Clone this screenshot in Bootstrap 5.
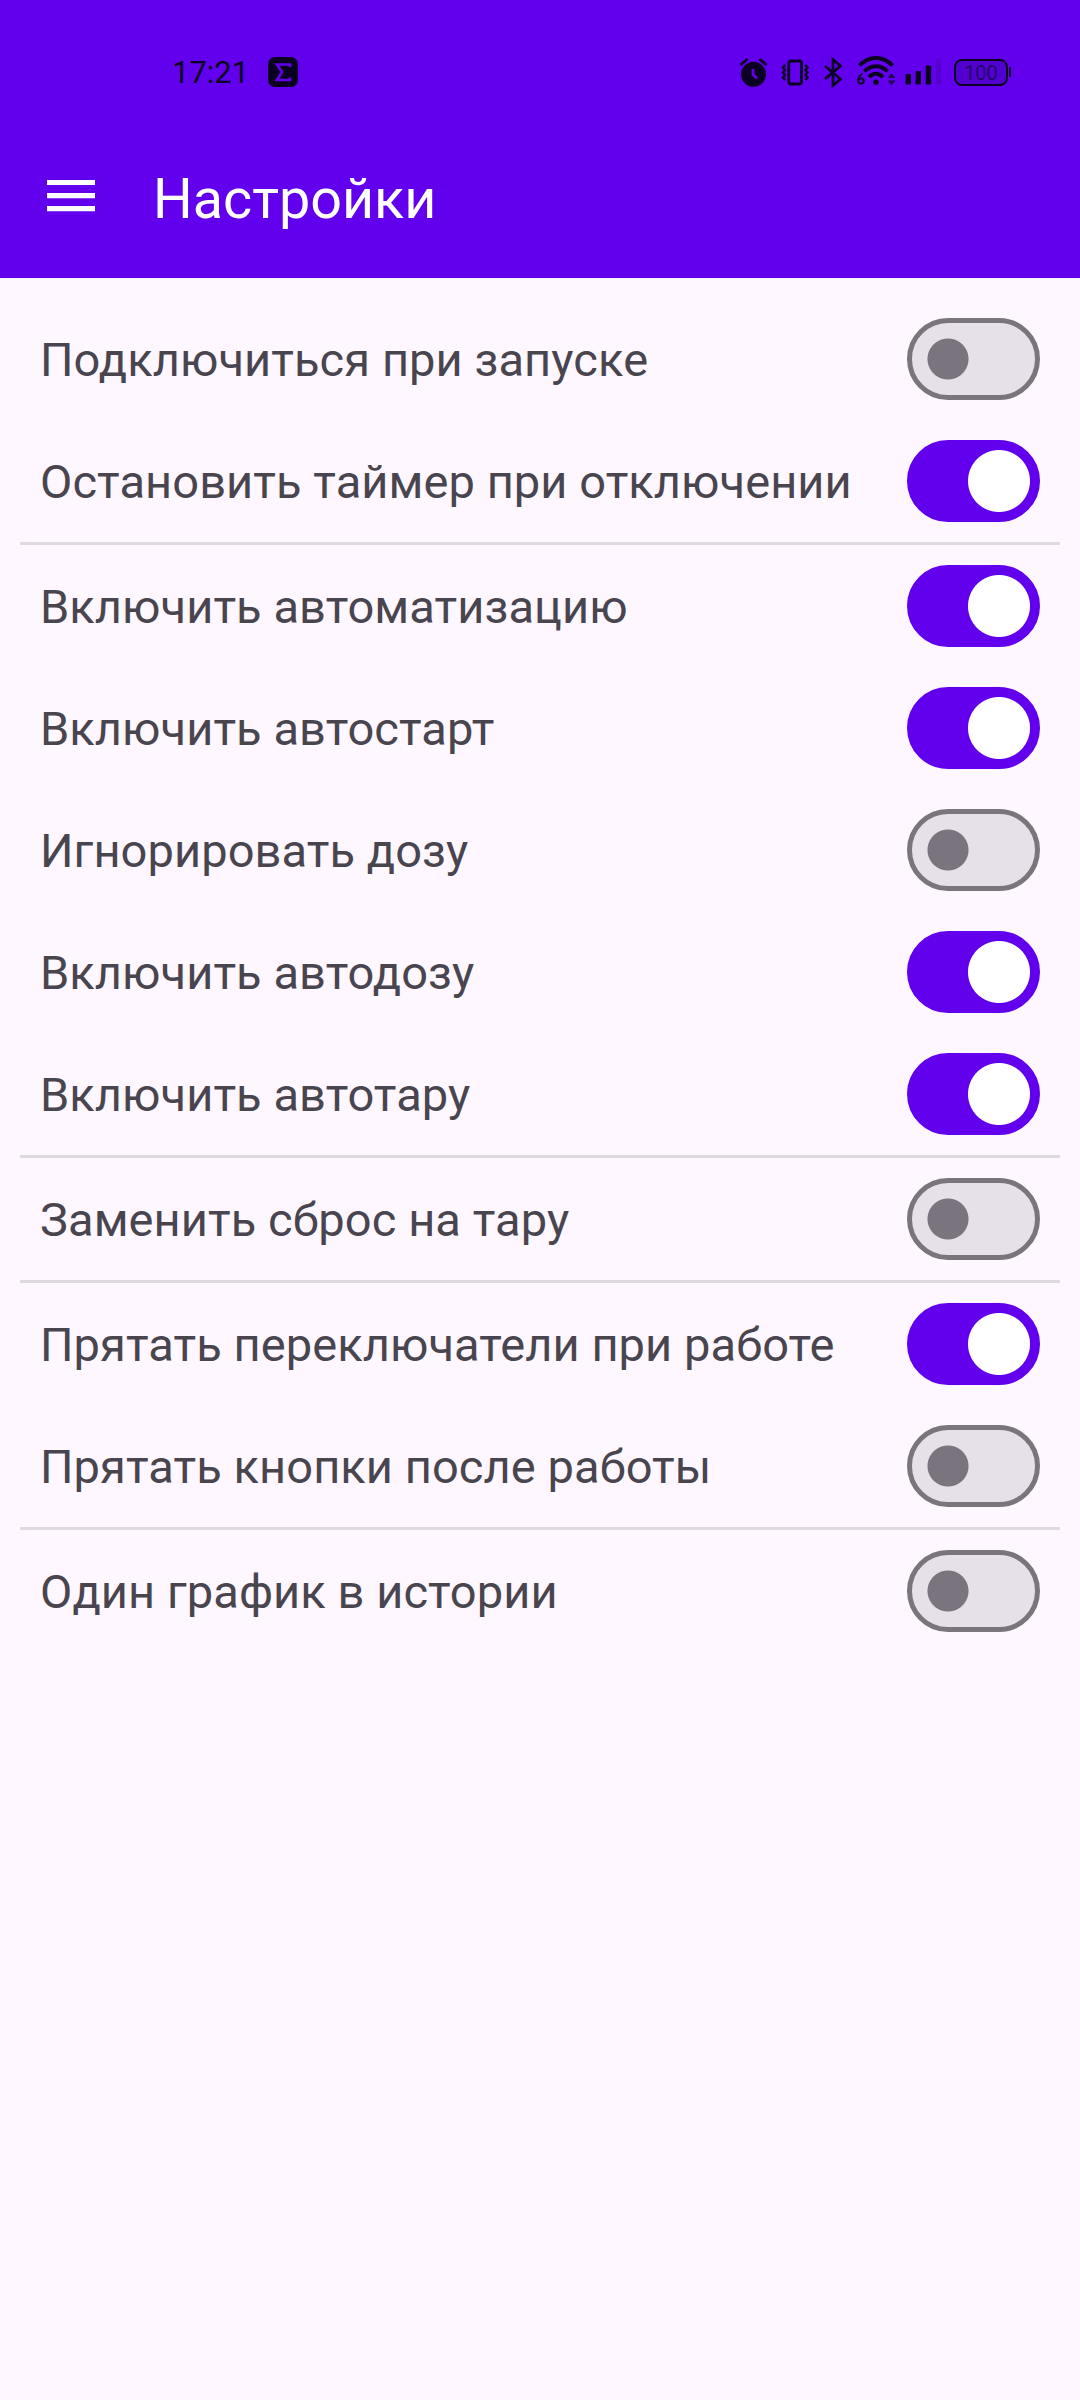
<!DOCTYPE html>
<html lang="ru">
<head>
<meta charset="utf-8">
<meta name="viewport" content="width=device-width, initial-scale=1">
<title>Настройки</title>
<link href="https://cdn.jsdelivr.net/npm/bootstrap@5.3.0/dist/css/bootstrap.min.css" rel="stylesheet">
<style>
:root{--brand:#6200ee;--ink:#0c0022}
body{background:#fef7ff;color:#49454f;font-family:Roboto,"Noto Sans",sans-serif;min-height:2400px}
.app-header{background:var(--brand);height:278px}
.status-bar{height:118px;padding:26px 69px 0 172px;color:var(--ink)}
.status-bar svg{display:block;flex:none}
.clock-time{font-size:31px;line-height:32px;width:96px;padding-top:2px;white-space:nowrap}
.battery-box{width:54px;height:27px;border:2px solid var(--ink);border-radius:8px;background:#5200d0;font-size:20px;line-height:24px;color:#26006b}
.battery-tip{width:2px;height:10px;background:var(--ink);margin-left:1px}
.title-bar{padding:46px 47px 0;height:160px}
.title-bar .btn{line-height:0;margin-top:16px}
.page-title{font-size:55.7px;line-height:66px;margin:2px 0 0 58px;font-weight:400}
.settings-list{padding:20px}
.setting-row{height:122px;padding:0 20px;font-size:47px;line-height:72px;letter-spacing:.08px}
.setting-row span{padding-top:1px}
.settings-group+.settings-group{border-top:3px solid #dfd9e0}
.setting-row .form-check-input{width:133px;height:82px;margin:0;border:5px solid #79747e;border-radius:41px;background-color:#e6e0e9;
background-image:radial-gradient(circle at 36px 36px,#79747e 20px,transparent 21px);background-size:100% 100%;background-position:0 0;flex:none;float:none}
.setting-row .form-check-input:checked{border-color:var(--brand);background-color:var(--brand);background-image:radial-gradient(circle at 87px 36px,#fff 30.5px,transparent 31.5px);background-position:0 0}
</style>
</head>
<body>
<header class="app-header">
  <div class="status-bar d-flex align-items-center">
    <span class="clock-time">17:21</span>
    <svg width="30" height="30" viewBox="0 0 30 30"><rect width="30" height="30" rx="7" fill="#0c0022"/><path d="M22 10V7.500H9L14 15 9 23H22V20.500" fill="none" stroke="#6200ee" stroke-width="2.600"/></svg>
    <div class="d-flex align-items-center ms-auto">
      <!-- alarm -->
      <svg width="43" height="32" viewBox="738 56 43 32"><circle cx="753.500" cy="74.300" r="12.500" fill="#0c0022"/><path d="M740.500 65l7-6M766.500 65l-7-6" stroke="#0c0022" stroke-width="2.800"/><path d="M753 69v5.500l4 4" fill="none" stroke="#6200ee" stroke-width="2.800"/></svg>
      <!-- vibration -->
      <svg width="43" height="32" viewBox="781 56 43 32" fill="none" stroke="#0c0022" stroke-width="2.400"><rect x="788.800" y="61" width="12.800" height="23" rx="2.500" stroke-width="2.800"/><path d="M785 65l-2 2.500 2 2.500-2 2.500 2 2.500-2 2.500 2 2.500M805.500 65l2 2.500-2 2.500 2 2.500-2 2.500 2 2.500-2 2.500"/></svg>
      <!-- bluetooth -->
      <svg width="33" height="32" viewBox="824 56 33 32" fill="none" stroke="#0c0022" stroke-width="2.700"><path d="M825 66l15.500 13-7.500 6.500V59.500l7.500 6.500L825 79"/></svg>
      <!-- wi-fi -->
      <svg width="48" height="32" viewBox="857 56 48 32" fill="none" stroke="#0c0022"><path d="M859.500 65.500C869 55.500 883 55.500 892.500 65.500M864.500 71.500C871 64.500 881 64.500 887.500 71.500M869 77.200C873 72.500 879 72.500 883 77.200" stroke-width="3.900"/><circle cx="876" cy="82.300" r="2.700" fill="#0c0022" stroke="none"/><circle cx="861" cy="81" r="2.700" stroke-width="1.800"/><path d="M862.500 73.500q-4.500 3-4.300 7.500" stroke-width="1.800"/><path d="M887.500 78l4-5 4 5zM887.500 80.500l4 5 4-5z" fill="#0c0022" stroke="none" opacity=".75"/></svg>
      <!-- signal -->
      <svg width="49" height="32" viewBox="905 56 49 32" fill="#0c0022"><rect x="905.500" y="74" width="5.500" height="10.500" rx="1"/><rect x="915.500" y="71" width="5.500" height="13.500" rx="1"/><rect x="925.700" y="65.500" width="5.500" height="19" rx="1"/><rect x="936" y="59" width="5" height="25.500" rx="1" opacity=".15"/></svg>
      <div class="battery-box text-center">100</div><span class="battery-tip"></span>
    </div>
  </div>
  <nav class="title-bar d-flex align-items-start text-white">
    <button class="btn p-0 border-0 rounded-0" type="button" aria-label="Меню"><svg width="48" height="32" viewBox="0 0 48 32" fill="#fff"><path d="M0 0h48v5H0zM0 13h48v5.300H0zM0 26h48v5.300H0z"/></svg></button>
    <h1 class="page-title">Настройки</h1>
  </nav>
</header>
<main class="settings-list">
  <section class="settings-group">
    <label class="setting-row form-switch d-flex align-items-center justify-content-between"><span>Подключиться при запуске</span><input class="form-check-input" type="checkbox" role="switch"></label>
    <label class="setting-row form-switch d-flex align-items-center justify-content-between"><span>Остановить таймер при отключении</span><input class="form-check-input" type="checkbox" role="switch" checked></label>
  </section>
  <section class="settings-group">
    <label class="setting-row form-switch d-flex align-items-center justify-content-between"><span>Включить автоматизацию</span><input class="form-check-input" type="checkbox" role="switch" checked></label>
    <label class="setting-row form-switch d-flex align-items-center justify-content-between"><span>Включить автостарт</span><input class="form-check-input" type="checkbox" role="switch" checked></label>
    <label class="setting-row form-switch d-flex align-items-center justify-content-between"><span>Игнорировать дозу</span><input class="form-check-input" type="checkbox" role="switch"></label>
    <label class="setting-row form-switch d-flex align-items-center justify-content-between"><span>Включить автодозу</span><input class="form-check-input" type="checkbox" role="switch" checked></label>
    <label class="setting-row form-switch d-flex align-items-center justify-content-between"><span>Включить автотару</span><input class="form-check-input" type="checkbox" role="switch" checked></label>
  </section>
  <section class="settings-group">
    <label class="setting-row form-switch d-flex align-items-center justify-content-between"><span>Заменить сброс на тару</span><input class="form-check-input" type="checkbox" role="switch"></label>
  </section>
  <section class="settings-group">
    <label class="setting-row form-switch d-flex align-items-center justify-content-between"><span>Прятать переключатели при работе</span><input class="form-check-input" type="checkbox" role="switch" checked></label>
    <label class="setting-row form-switch d-flex align-items-center justify-content-between"><span>Прятать кнопки после работы</span><input class="form-check-input" type="checkbox" role="switch"></label>
  </section>
  <section class="settings-group">
    <label class="setting-row form-switch d-flex align-items-center justify-content-between"><span>Один график в истории</span><input class="form-check-input" type="checkbox" role="switch"></label>
  </section>
</main>
<script src="https://cdn.jsdelivr.net/npm/bootstrap@5.3.0/dist/js/bootstrap.bundle.min.js"></script>
</body>
</html>
